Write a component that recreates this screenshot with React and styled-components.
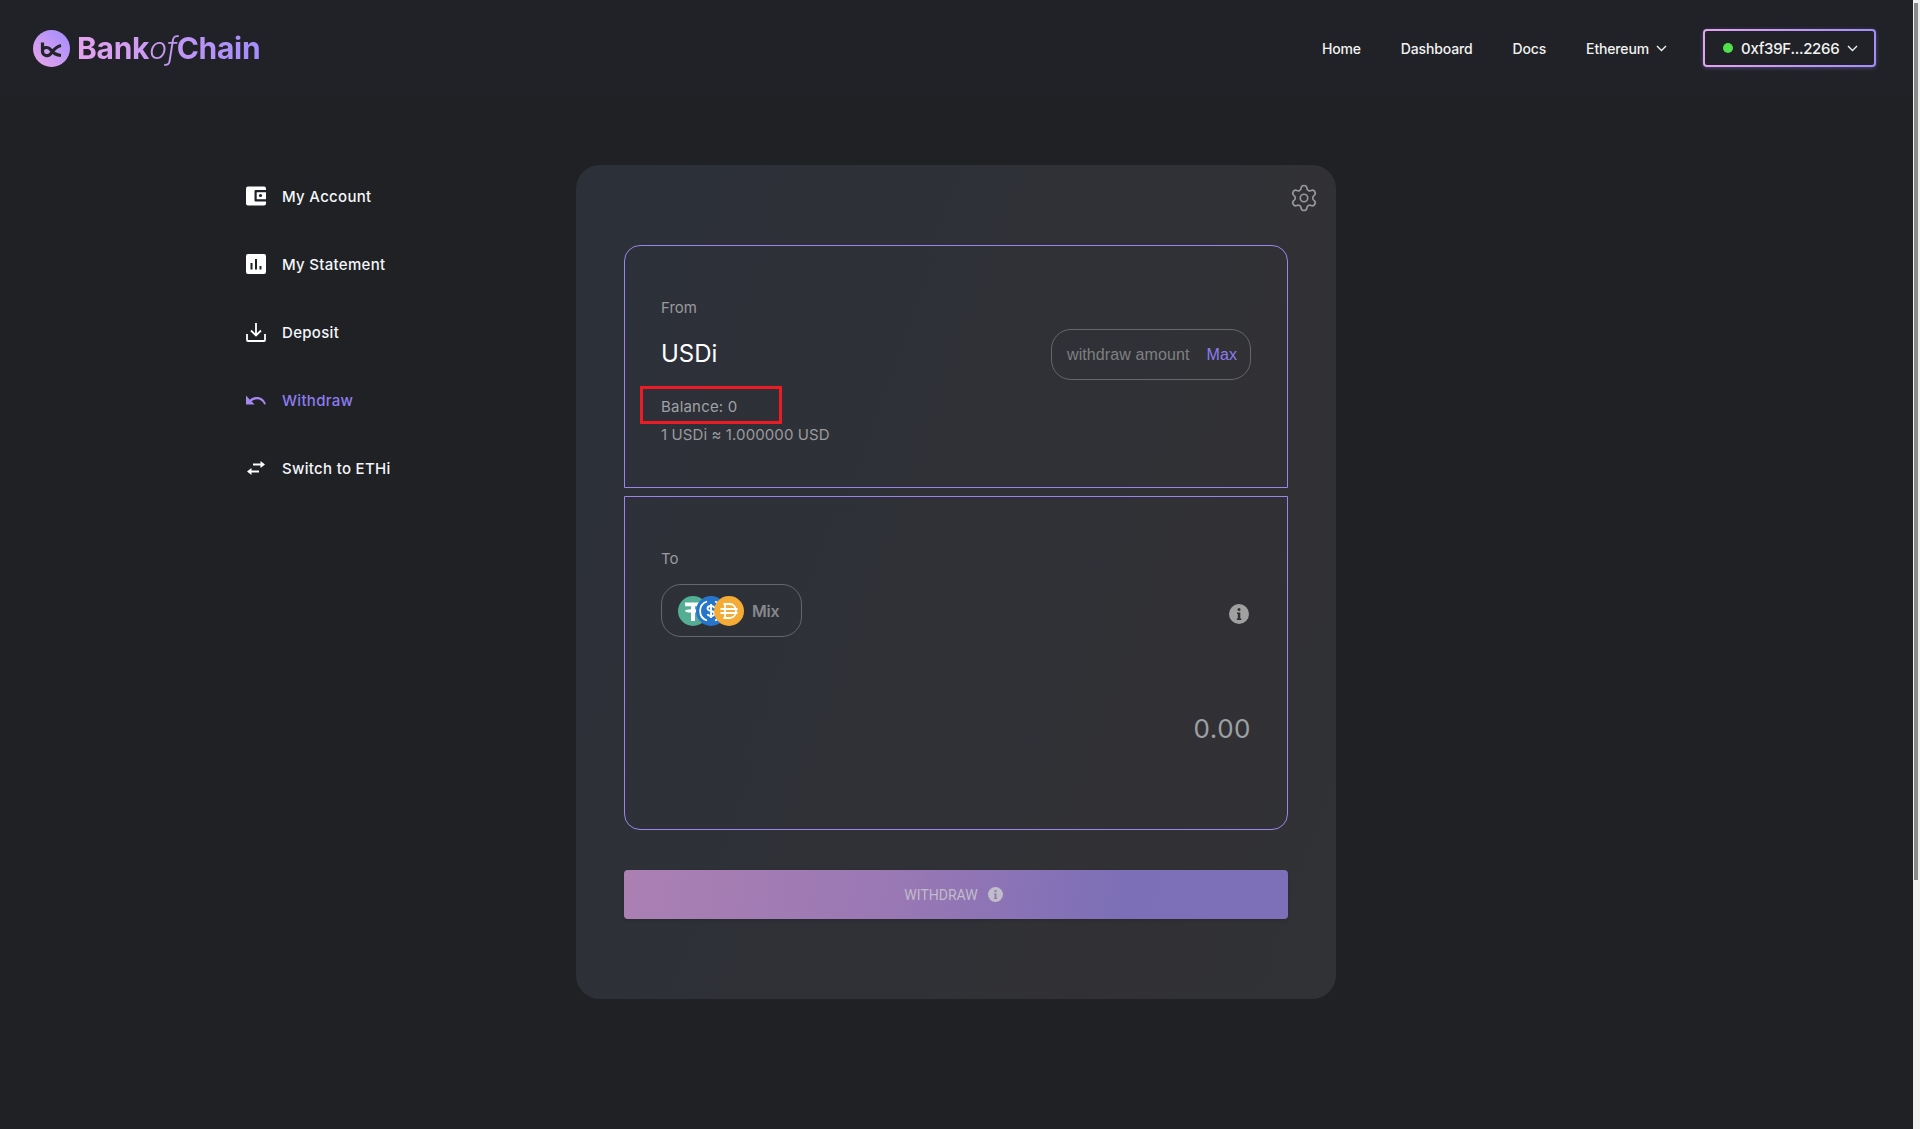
import React from "react";
import styled, { createGlobalStyle } from "styled-components";
import { Settings } from "lucide-react";

const GlobalStyle = createGlobalStyle`
  html, body {
    margin: 0;
    padding: 0;
    background: #1f2125;
  }
  body {
    font-family: Inter, "Liberation Sans", sans-serif;
    color: #fff;
  }
`;

const Page = styled.div`
  min-height: 100vh;
  background: #1f2125;
`;

const ScrollTrack = styled.div`
  position: fixed;
  top: 0;
  right: 0;
  bottom: 0;
  width: 7px;
  background: #f1f1f1;
`;

const ScrollThumb = styled.div`
  width: 4px;
  height: 877px;
  margin: 3px 0 0 1px;
  background: #8a8a8a;
`;

const Header = styled.header`
  height: 96px;
  background: #202227;
  display: flex;
  align-items: center;
  justify-content: space-between;
  padding: 0 44px 0 33px;
`;

const Logo = styled.div`
  display: flex;
  align-items: center;
  gap: 7px;
`;

const LogoText = styled.div`
  font-size: 30px;
  font-weight: 700;
  letter-spacing: -0.3px;
  background: linear-gradient(90deg, #e5a3ee, #a48dfb);
  -webkit-background-clip: text;
  background-clip: text;
  color: transparent;
  em {
    font-weight: 300;
  }
`;

const Nav = styled.nav`
  display: flex;
  align-items: center;
`;

const NavLink = styled.a`
  display: flex;
  align-items: center;
  gap: 7px;
  font-size: 14px;
  font-weight: 500;
  letter-spacing: -0.15px;
  color: #f2f2f2;
  margin-right: ${(p) => p.$gap}px;
`;

const WalletButton = styled.button`
  width: 173px;
  height: 38px;
  box-sizing: border-box;
  padding: 0 16px 0 18px;
  display: flex;
  align-items: center;
  border: 2px solid transparent;
  border-radius: 4px;
  background:
    linear-gradient(#202227, #202227) padding-box,
    linear-gradient(90deg, #e5a3ee, #a48dfb) border-box;
  box-shadow: 0 1px 4px rgba(164, 141, 251, 0.35);
  color: #f2f2f2;
  font-family: inherit;
  font-size: 15px;
  font-weight: 500;
  letter-spacing: -0.3px;
`;

const GreenDot = styled.span`
  width: 10px;
  height: 10px;
  border-radius: 50%;
  background: #4fe04a;
  margin-right: 8px;
`;

const WalletLabel = styled.span`
  flex: 1;
  text-align: left;
`;

const Main = styled.main`
  display: flex;
  align-items: flex-start;
  padding: 69px 0 0 246px;
`;

const Sidebar = styled.aside`
  width: 330px;
  display: flex;
  flex-direction: column;
  gap: 28px;
  padding-top: 11px;
`;

const SideItem = styled.a`
  height: 40px;
  display: flex;
  align-items: center;
  gap: 16px;
  font-size: 15px;
  font-weight: 500;
  letter-spacing: 0.3px;
  color: ${(p) => (p.$active ? "#8c7cf0" : "#f4f6fa")};
`;

const Card = styled.section`
  width: 760px;
  height: 834px;
  box-sizing: border-box;
  padding: 18px 48px 0;
  border-radius: 24px;
  background: linear-gradient(110deg, #2c3039 0%, #2f3137 45%, #313135 75%, #313236 100%);
`;

const CardTop = styled.div`
  display: flex;
  justify-content: flex-end;
  margin: 0 -31px 0 0;
  height: 62px;
  color: #98999b;
`;

const Box = styled.div`
  height: ${(p) => p.$height}px;
  box-sizing: border-box;
  border: 1px solid #9a86ea;
  border-radius: ${(p) => p.$radius};
  padding: ${(p) => p.$padding};
  margin-bottom: ${(p) => p.$mb}px;
  position: relative;
`;

const Label = styled.div`
  font-size: 15px;
  line-height: 20px;
  color: #9a9b9d;
`;

const FromRow = styled.div`
  display: flex;
  align-items: center;
  justify-content: space-between;
  margin-top: 11px;
  height: 51px;
`;

const TokenName = styled.div`
  font-size: 24px;
  font-weight: 400;
  color: #fff;
  padding-bottom: 2px;
`;

const AmountPill = styled.div`
  width: 200px;
  height: 51px;
  box-sizing: border-box;
  border: 1px solid #66676a;
  border-radius: 20px;
  display: flex;
  align-items: center;
  justify-content: space-between;
  padding: 0 13px 0 15px;
  font-family: "Liberation Sans", Arial, sans-serif;
  font-size: 16px;
  letter-spacing: 0.1px;
  color: #7f8082;
`;

const MaxLink = styled.span`
  color: #8c7cf0;
`;

const Balance = styled.div`
  position: relative;
  margin-top: 17px;
  font-size: 15px;
  line-height: 20px;
  letter-spacing: 0.2px;
  color: #a0a1a3;
`;

const Annotation = styled.div`
  position: absolute;
  left: -21px;
  top: -11px;
  width: 142px;
  height: 38px;
  box-sizing: border-box;
  border: 3px solid #ed1c24;
`;

const Rate = styled.div`
  margin-top: 8px;
  font-size: 15px;
  line-height: 20px;
  letter-spacing: 0.1px;
  color: #9a9b9d;
`;

const MixRow = styled.div`
  display: flex;
  align-items: center;
  justify-content: space-between;
  margin-top: 15px;
`;

const MixPill = styled.div`
  width: 141px;
  height: 53px;
  box-sizing: border-box;
  border: 1px solid #66676a;
  border-radius: 20px;
  display: flex;
  align-items: center;
  padding-left: 16px;
  font-size: 16px;
  font-weight: 600;
  letter-spacing: -0.2px;
  color: #87888b;
`;

const Coins = styled.div`
  display: flex;
  margin-right: 8px;
  svg + svg {
    margin-left: -12px;
  }
`;

const InfoWrap = styled.div`
  margin: 6px 2px 0 0;
  display: flex;
`;

const Total = styled.div`
  margin-top: 76px;
  text-align: right;
  font-size: 26px;
  font-weight: 400;
  letter-spacing: 0.5px;
  color: #9da0a3;
`;

const SubmitButton = styled.button`
  width: 100%;
  height: 49px;
  border: 0;
  border-radius: 4px;
  display: flex;
  align-items: center;
  justify-content: center;
  gap: 10px;
  padding: 0 5px 0 0;
  background: linear-gradient(100deg, #ab80b3 0%, #9a78b4 40%, #7c6fb7 75%, #7e70b8 100%);
  box-shadow: 0 2px 4px rgba(0, 0, 0, 0.12);
  color: #c1bcc9;
  font-family: Roboto, sans-serif;
  font-size: 14px;
`;

const Chevron = () => (
  <svg width="11" height="7" viewBox="0 0 11 7" fill="none" stroke="currentColor" strokeWidth="1.4">
    <path d="M1 1l4.5 4.5L10 1" />
  </svg>
);

const LogoIcon = () => (
  <svg width="37" height="37" viewBox="0 0 37 37">
    <defs>
      <linearGradient id="logoGrad" x1="0" y1="1" x2="1" y2="0">
        <stop offset="0" stopColor="#eaa6e8" />
        <stop offset="1" stopColor="#a08cff" />
      </linearGradient>
    </defs>
    <circle cx="18.5" cy="18.5" r="18.5" fill="url(#logoGrad)" />
    <path
      d="M9.5 12.500v9a4.500 4.500 0 0 0 8 2.500c2.500-3.500 5-7.500 10.500-8.500M9.500 20c1-3 6-3.500 8-.500c2.500 3.500 5 5.500 10.500 6"
      fill="none"
      stroke="#22242a"
      strokeWidth="3.2"
    />
  </svg>
);

const WalletIcon = () => (
  <svg width="20" height="20" viewBox="0 0 20 20">
    <rect y="0.500" width="20" height="19" rx="2" fill="#fff" />
    <path d="M20 4H9.500a1 1 0 0 0-1 1v9.500a1 1 0 0 0 1 1H20v-2.200h-9.300V6.200H20z" fill="#202126" />
    <circle cx="14.500" cy="9.500" r="1.600" fill="#202126" />
  </svg>
);

const StatementIcon = () => (
  <svg width="20" height="20" viewBox="0 0 20 20">
    <path
      fillRule="evenodd"
      fill="#fff"
      d="M2 0h16a2 2 0 0 1 2 2v16a2 2 0 0 1-2 2H2a2 2 0 0 1-2-2V2a2 2 0 0 1 2-2zm2.500 9v6.500h2V9zm4.500-4v10.500h2V5zm4.500 7v3.500h2V12z"
    />
  </svg>
);

const DepositIcon = () => (
  <svg width="20" height="20" viewBox="0 0 20 20" fill="none" stroke="#fff" strokeWidth="1.8">
    <path d="M10 1v12M5 8.500l5 5 5-5" />
    <path d="M1 12v6a1 1 0 0 0 1 1h16a1 1 0 0 0 1-1v-6" />
  </svg>
);

const WithdrawIcon = () => (
  <svg width="20" height="12" viewBox="0 0 22 12">
    <path fill="#a689f0" d="M0 1v10h9.500L6 7.500C8 5.900 10 5.200 12 5.200c3.500 0 6.600 2.200 8 5.800l2-.7C20.300 5.500 16.500 2.600 12 2.600c-2.800 0-5.500 1-7.700 3L0 1z" />
  </svg>
);

const SwitchIcon = () => (
  <svg width="20" height="14" viewBox="0 0 20 14" fill="#fff">
    <path d="M7 2.500h7.500V0L19 3.500 14.500 7V4.500H7z" />
    <path d="M13 9.500H5.500V7L1 10.500 5.500 14v-2.500H13z" />
  </svg>
);

const InfoIcon = ({ size, fill, mark }) => (
  <svg width={size} height={size} viewBox="0 0 20 20">
    <circle cx="10" cy="10" r="10" fill={fill} />
    <circle cx="10" cy="5.500" r="1.500" fill={mark} />
    <path d="M8 8.500h3.300v6h1v1.500H7.800v-1.500h1V10H8z" fill={mark} />
  </svg>
);

const TetherCoin = () => (
  <svg width="30" height="30" viewBox="0 0 30 30">
    <circle cx="15" cy="15" r="15" fill="#53ae94" />
    <path d="M7 6.500h16v3.800h-6v3c3.500.2 6 .8 6 1.600s-2.500 1.400-6 1.600V25h-4v-8.500c-3.500-.2-6-.8-6-1.600s2.500-1.400 6-1.600v-3H7z" fill="#fff" />
  </svg>
);

const UsdcCoin = () => (
  <svg width="30" height="30" viewBox="0 0 30 30">
    <circle cx="15" cy="15" r="15" fill="#2775ca" />
    <path d="M11 5.500a10 10 0 0 0 0 19M19 5.500a10 10 0 0 1 0 19" fill="none" stroke="#fff" strokeWidth="1.800" />
    <path d="M18.500 12c-.5-1.300-1.800-2-3.500-2-2 0-3.500 1-3.500 2.500 0 3.500 7 1.500 7 5 0 1.500-1.500 2.500-3.500 2.500-1.800 0-3-.7-3.500-2M15 8v14" fill="none" stroke="#fff" strokeWidth="1.800" />
  </svg>
);

const DaiCoin = () => (
  <svg width="30" height="30" viewBox="0 0 30 30">
    <circle cx="15" cy="15" r="15" fill="#f5ac37" />
    <path d="M9.500 8h6c4 0 6.500 3 6.500 7s-2.500 7-6.500 7h-6M11 8v14M6.500 13h17M6.500 17h17" fill="none" stroke="#fff" strokeWidth="1.800" />
  </svg>
);

const menu = [
  { label: "My Account", icon: <WalletIcon /> },
  { label: "My Statement", icon: <StatementIcon /> },
  { label: "Deposit", icon: <DepositIcon /> },
  { label: "Withdraw", icon: <WithdrawIcon />, active: true },
  { label: "Switch to ETHi", icon: <SwitchIcon /> },
];

export default function App() {
  return (
    <Page>
      <GlobalStyle />
      <ScrollTrack>
        <ScrollThumb />
      </ScrollTrack>
      <Header>
        <Logo>
          <LogoIcon />
          <LogoText>
            Bank<em>of</em>Chain
          </LogoText>
        </Logo>
        <Nav>
          <NavLink $gap={40}>Home</NavLink>
          <NavLink $gap={40}>Dashboard</NavLink>
          <NavLink $gap={40}>Docs</NavLink>
          <NavLink $gap={36}>
            Ethereum <Chevron />
          </NavLink>
          <WalletButton>
            <GreenDot />
            <WalletLabel>0xf39F...2266</WalletLabel>
            <Chevron />
          </WalletButton>
        </Nav>
      </Header>
      <Main>
        <Sidebar>
          {menu.map((item) => (
            <SideItem key={item.label} $active={item.active}>
              {item.icon}
              {item.label}
            </SideItem>
          ))}
        </Sidebar>
        <Card>
          <CardTop>
            <Settings size={30} strokeWidth={1.3} />
          </CardTop>
          <Box $height={243} $radius="16px 16px 0 0" $padding="52px 36px 0" $mb={8}>
            <Label>From</Label>
            <FromRow>
              <TokenName>USDi</TokenName>
              <AmountPill>
                withdraw amount
                <MaxLink>Max</MaxLink>
              </AmountPill>
            </FromRow>
            <Balance>
              Balance: 0
              <Annotation />
            </Balance>
            <Rate>1 USDi ≈ 1.000000 USD</Rate>
          </Box>
          <Box $height={334} $radius="0 0 16px 16px" $padding="52px 36px 0" $mb={40}>
            <Label>To</Label>
            <MixRow>
              <MixPill>
                <Coins>
                  <TetherCoin />
                  <UsdcCoin />
                  <DaiCoin />
                </Coins>
                Mix
              </MixPill>
              <InfoWrap>
                <InfoIcon size={20} fill="#a0a0a1" mark="#303135" />
              </InfoWrap>
            </MixRow>
            <Total>0.00</Total>
          </Box>
          <SubmitButton>
            WITHDRAW
            <InfoIcon size={15} fill="#c1bcc9" mark="#8f78b4" />
          </SubmitButton>
        </Card>
      </Main>
    </Page>
  );
}
